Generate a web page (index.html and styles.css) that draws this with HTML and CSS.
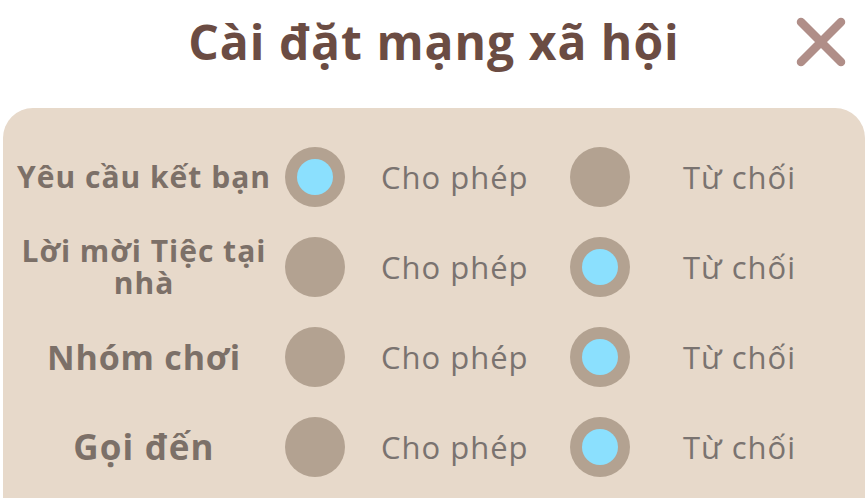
FILE: index.html
```html
<!DOCTYPE html>
<html lang="vi">
<head>
<meta charset="utf-8">
<title>Cài đặt mạng xã hội</title>
<link rel="stylesheet" href="styles.css">
</head>
<body>
<div class="screen">
  <header class="header">
    <div class="spacer"></div>
    <h1 class="title">Cài đặt mạng xã hội</h1>
    <button class="close" aria-label="Đóng">
      <svg width="52" height="52" viewBox="0 0 52 52">
        <path d="M6 6 L46 46 M46 6 L6 46" stroke="#b08e88" stroke-width="8.5" stroke-linecap="round" fill="none"/>
      </svg>
    </button>
  </header>
  <section class="panel">
    <div class="row">
      <div class="label size-s">Yêu cầu kết bạn</div>
      <span class="radio on"></span>
      <span class="opt opt-allow">Cho phép</span>
      <span class="radio"></span>
      <span class="opt opt-deny">Từ chối</span>
    </div>
    <div class="row">
      <div class="label size-s two">Lời mời Tiệc tại nhà</div>
      <span class="radio"></span>
      <span class="opt opt-allow">Cho phép</span>
      <span class="radio on"></span>
      <span class="opt opt-deny">Từ chối</span>
    </div>
    <div class="row">
      <div class="label size-m">Nhóm chơi</div>
      <span class="radio"></span>
      <span class="opt opt-allow">Cho phép</span>
      <span class="radio on"></span>
      <span class="opt opt-deny">Từ chối</span>
    </div>
    <div class="row">
      <div class="label size-l">Gọi đến</div>
      <span class="radio"></span>
      <span class="opt opt-allow">Cho phép</span>
      <span class="radio on"></span>
      <span class="opt opt-deny">Từ chối</span>
    </div>
  </section>
</div>
</body>
</html>
```
FILE: styles.css
```css
html, body {
  margin: 0;
  padding: 0;
  background: #ffffff;
  width: 868px;
  height: 498px;
  overflow: hidden;
}
body {
  font-family: "Open Sans", "Noto Sans", sans-serif;
}
.screen {
  width: 868px;
  height: 498px;
  display: flex;
  flex-direction: column;
}
.header {
  height: 108px;
  display: grid;
  grid-template-columns: 1fr auto 1fr;
  align-items: start;
}
.title {
  margin: 0;
  padding-top: 7px;
  font-size: 48px;
  font-weight: 700;
  color: #6b4c43;
  line-height: 70px;
  letter-spacing: 1px;
}
.close {
  justify-self: end;
  margin: 16px 21px 0 0;
  padding: 0;
  border: 0;
  background: none;
  width: 52px;
  height: 52px;
}
.close svg { display: block; }
.panel {
  flex: 1;
  margin: 0 3px;
  background: #e7d9ca;
  border-radius: 30px 30px 0 0;
  padding-top: 24px;
}
.row {
  height: 90px;
  display: grid;
  grid-template-columns: 282px 60px 225px 60px 1fr;
  align-items: center;
}
.label {
  justify-self: center;
  text-align: center;
  font-weight: 700;
  color: #7c7068;
  white-space: nowrap;
}
.size-s {
  font-size: 30px;
  line-height: 32px;
  letter-spacing: 1px;
}
.size-m {
  font-size: 34px;
  line-height: 40px;
  letter-spacing: 0.8px;
}
.size-l {
  font-size: 35px;
  line-height: 40px;
  letter-spacing: 1.2px;
}
.label.two {
  white-space: normal;
  width: 262px;
}
.radio {
  width: 60px;
  height: 60px;
  border-radius: 50%;
  background: #b3a291;
  display: flex;
  align-items: center;
  justify-content: center;
}
.radio.on::after {
  content: "";
  width: 36px;
  height: 36px;
  border-radius: 50%;
  background: #8be0fe;
}
.opt {
  font-size: 31px;
  letter-spacing: 1px;
  color: #7a7370;
  line-height: 40px;
}
.opt-allow { padding-left: 36px; }
.opt-deny { padding-left: 53px; }
```
